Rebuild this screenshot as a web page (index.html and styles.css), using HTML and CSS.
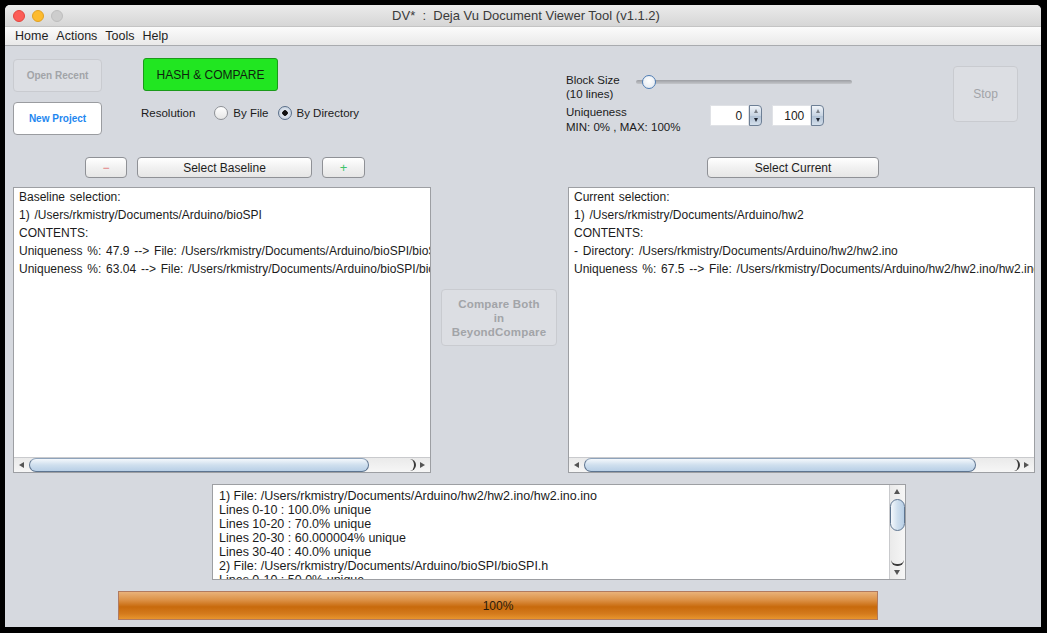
FILE: index.html
```html
<!DOCTYPE html>
<html>
<head>
<meta charset="utf-8">
<link rel="stylesheet" href="styles.css">
</head>
<body>
<div class="window">
  <div class="titlebar">
    <div class="lights"><span class="light red"></span><span class="light yellow"></span><span class="light gray"></span></div>
    <div class="title">DV* &nbsp;: &nbsp;Deja Vu Document Viewer Tool (v1.1.2)</div>
  </div>
  <div class="menubar">
    <span>Home</span><span>Actions</span><span>Tools</span><span>Help</span>
  </div>
  <div class="content">
    <div class="top">
      <div class="col-a">
        <div class="btn disabled small-bold open-recent">Open Recent</div>
        <div class="btn new-project">New Project</div>
      </div>
      <div class="col-b">
        <div class="btn green">HASH &amp; COMPARE</div>
        <div class="resolution">
          <span class="res-label">Resolution</span>
          <span class="radio"></span><span class="radio-text">By File</span>
          <span class="radio checked"></span><span class="radio-text">By Directory</span>
        </div>
      </div>
      <div class="col-c">
        <div class="block-row">
          <div class="lbl block-lbl">Block Size<br>(10 lines)</div>
          <div class="slider"><div class="track"></div><div class="knob"></div></div>
        </div>
        <div class="uniq-row">
          <div class="lbl uniq-lbl">Uniqueness<br>MIN: 0% , MAX: 100%</div>
          <div class="spinner"><div class="spin-field">0</div><div class="spin-btns"><span class="up"></span><span class="down"></span></div></div>
          <div class="spinner"><div class="spin-field">100</div><div class="spin-btns"><span class="up"></span><span class="down"></span></div></div>
        </div>
      </div>
      <div class="col-d">
        <div class="btn disabled stop">Stop</div>
      </div>
    </div>

    <div class="selects">
      <div class="btn aqua minus"><span class="minus-sign">−</span></div>
      <div class="btn aqua baseline">Select Baseline</div>
      <div class="btn aqua plus"><span class="plus-sign">+</span></div>
      <div class="btn aqua current">Select Current</div>
    </div>

    <div class="panels">
      <div class="panel left-panel">
        <div class="panel-text">
          <div>Baseline selection:</div>
          <div>1) /Users/rkmistry/Documents/Arduino/bioSPI</div>
          <div>CONTENTS:</div>
          <div>Uniqueness %: 47.9 --&gt; File: /Users/rkmistry/Documents/Arduino/bioSPI/bioSPI.h</div>
          <div>Uniqueness %: 63.04 --&gt; File: /Users/rkmistry/Documents/Arduino/bioSPI/bioSPI.cpp</div>
        </div>
        <div class="hscroll">
          <span class="arrow left-arrow"></span>
          <div class="htrack"><div class="hthumb" style="width:340px"></div><div class="endcap"></div></div>
          <span class="arrow right-arrow"></span>
        </div>
      </div>
      <div class="middle">
        <div class="btn disabled compare">Compare Both<br>in<br>BeyondCompare</div>
      </div>
      <div class="panel right-panel">
        <div class="panel-text">
          <div>Current selection:</div>
          <div>1) /Users/rkmistry/Documents/Arduino/hw2</div>
          <div>CONTENTS:</div>
          <div>- Directory: /Users/rkmistry/Documents/Arduino/hw2/hw2.ino</div>
          <div>Uniqueness %: 67.5 --&gt; File: /Users/rkmistry/Documents/Arduino/hw2/hw2.ino/hw2.ino.ino</div>
        </div>
        <div class="hscroll">
          <span class="arrow left-arrow"></span>
          <div class="htrack"><div class="hthumb" style="width:392px"></div><div class="endcap"></div></div>
          <span class="arrow right-arrow"></span>
        </div>
      </div>
    </div>

    <div class="results">
      <div class="results-text">
        <div>1) File: /Users/rkmistry/Documents/Arduino/hw2/hw2.ino/hw2.ino.ino</div>
        <div>Lines 0-10 : 100.0% unique</div>
        <div>Lines 10-20 : 70.0% unique</div>
        <div>Lines 20-30 : 60.000004% unique</div>
        <div>Lines 30-40 : 40.0% unique</div>
        <div>2) File: /Users/rkmistry/Documents/Arduino/bioSPI/bioSPI.h</div>
        <div>Lines 0-10 : 50.0% unique</div>
      </div>
      <div class="vscroll">
        <span class="varrow up-arrow"></span>
        <div class="vtrack"><div class="vthumb"></div><div class="vendcap"></div></div>
        <span class="varrow down-arrow"></span>
      </div>
    </div>

    <div class="progress"><span>100%</span></div>
  </div>
</div>
</body>
</html>
```

FILE: styles.css
```css
* { box-sizing: border-box; }
html, body { margin: 0; padding: 0; }
body {
  background: #000;
  padding: 5px;
  font-family: "Liberation Sans", Arial, sans-serif;
  font-size: 12px;
  color: #1b1b1b;
}
.window {
  width: 1036px;
  height: 622px;
  border-radius: 5px 5px 0 0;
  overflow: hidden;
  background: #d6d9df;
  display: flex;
  flex-direction: column;
}
.titlebar {
  height: 21px;
  background: linear-gradient(#ebebeb, #d6d6d6);
  display: flex;
  align-items: center;
}
.lights { display: flex; gap: 7px; margin-left: 8px; }
.light { width: 12px; height: 12px; border-radius: 50%; display: block; }
.light.red { background: #fc5d57; border: 1px solid #e2463f; }
.light.yellow { background: #fdbb2e; border: 1px solid #e0a023; }
.light.gray { background: #cdcdcd; border: 1px solid #bdbdbd; }
.title {
  flex: 1;
  text-align: center;
  font-size: 13px;
  color: #3a3a3a;
  margin-right: 52px;
}
.menubar {
  height: 20px;
  background: linear-gradient(#fbfbfb, #e9e9e9);
  border-bottom: 1px solid #a9abaf;
  border-top: 1px solid #c4c4c4;
  display: flex;
  align-items: center;
  padding-left: 10px;
  gap: 8px;
  font-size: 12.5px;
  color: #1f1f1f;
}
.content { flex: 1; display: flex; flex-direction: column; }

/* ----- buttons ----- */
.btn {
  display: flex;
  align-items: center;
  justify-content: center;
  border-radius: 4px;
  text-align: center;
}
.btn.disabled {
  background: #dcdee3;
  border: 1px solid #c9cbd0;
  color: #a2a4a8;
}
.small-bold { font-size: 10px; font-weight: bold; }
.aqua {
  background: linear-gradient(#ffffff, #f1f1f1 50%, #e6e6e6);
  border: 1px solid #8f9196;
  font-size: 12px;
  color: #1d1d1d;
  height: 21px;
}

/* ----- top area ----- */
.top { height: 111px; display: flex; align-items: flex-start; }
.col-a { margin-left: 8px; width: 89px; padding-top: 13px; display: flex; flex-direction: column; gap: 10px; }
.open-recent { height: 33px; }
.new-project {
  height: 33px;
  background: #fff;
  border: 1px solid #9a9ca0;
  color: #1e87f0;
  font-size: 10px;
  font-weight: bold;
}
.col-b { margin-left: 39px; width: 250px; padding-top: 12px; }
.green {
  margin-left: 2px;
  width: 135px;
  height: 33px;
  background: #21e621;
  border: 1px solid #1b9a1b;
  font-size: 12px;
  color: #0f1f0f;
  border-radius: 3px;
}
.resolution {
  margin-top: 13px; height: 18px; display: flex; align-items: center;
  font-size: 11.5px; white-space: nowrap;
}
.res-label { margin-right: 19px; }
.radio {
  flex: none;
  width: 14px; height: 14px; border-radius: 50%;
  border: 1px solid #8e9196;
  background: linear-gradient(#ffffff, #e6e6e6);
  display: inline-block;
  margin-right: 5px;
}
.radio.checked {
  border-color: #5a6f8a;
  background: radial-gradient(circle, #111 0 2.5px, #dfe6ef 3px, #b9c6d6);
}
.radio-text { margin-right: 9px; }
.col-c { margin-left: 175px; width: 290px; padding-top: 27px; }
.lbl { font-size: 11.5px; color: #1b1b1b; }
.block-row { display: flex; align-items: flex-start; }
.block-lbl { width: 70px; line-height: 14px; }
.slider { position: relative; width: 216px; height: 14px; margin-top: 2px; }
.track {
  position: absolute; left: 0; right: 0; top: 5px; height: 4px; border-radius: 2px;
  background: linear-gradient(#9c9ea3, #c4c6ca);
}
.knob {
  position: absolute; left: 6px; top: 0; width: 14px; height: 14px; border-radius: 50%;
  background: radial-gradient(circle at 50% 40%, #ffffff, #dfe6ee);
  border: 1.5px solid #4e7db4;
}
.uniq-row { display: flex; align-items: flex-start; margin-top: 4px; }
.uniq-lbl { width: 144px; line-height: 15px; }
.spinner { display: flex; width: 52px; height: 21px; margin-right: 10px; }
.spin-field {
  width: 40px; background: #fff; text-align: right; padding-right: 6px;
  font-size: 12px; line-height: 21px; border: 1px solid #e0e2e6;
}
.spin-btns {
  width: 13px; border: 1px solid #6d7f95; border-radius: 0 4px 4px 0;
  background: linear-gradient(#f0f4f9, #c8d4e2 50%, #aebfd3 50%, #d4dfeb);
  display: flex; flex-direction: column; align-items: center; justify-content: space-around;
}
.up, .down { width: 0; height: 0; border-left: 2.5px solid transparent; border-right: 2.5px solid transparent; }
.up { border-bottom: 4px solid #7a7f86; }
.down { border-top: 4px solid #1e2430; }
.col-d { margin-left: 97px; padding-top: 20px; }
.stop { width: 65px; height: 56px; font-size: 12px; }

/* ----- select row ----- */
.selects { display: flex; height: 21px; }
.minus { margin-left: 80px; width: 42px; }
.minus-sign { color: #e2777a; font-size: 12px; }
.baseline { margin-left: 10px; width: 175px; }
.plus { margin-left: 10px; width: 43px; }
.plus-sign { color: #3fc46a; font-size: 13px; }
.current { margin-left: 342px; width: 172px; }

/* ----- panels ----- */
.panels { display: flex; height: 286px; margin-top: 9px; }
.panel {
  background: #fff;
  border: 1px solid #9d9fa3;
  display: flex; flex-direction: column;
  overflow: hidden;
}
.left-panel { margin-left: 8px; width: 418px; }
.right-panel { width: 467px; }
.panel-text {
  flex: 1;
  padding: 0 0 0 5px;
  line-height: 18px;
  white-space: nowrap;
  overflow: hidden;
  font-size: 12px;
  word-spacing: 1.5px;
}
.middle { width: 137px; padding-top: 102px; padding-left: 10px; }
.compare {
  width: 116px; height: 57px;
  font-weight: bold; font-size: 11.5px; line-height: 14px;
  color: #a7a9ad;
  letter-spacing: 0.2px;
}
.hscroll {
  height: 15px;
  display: flex;
  align-items: stretch;
  background: linear-gradient(#eaeaea, #f6f6f6);
  border-top: 1px solid #c9cacd;
}
.arrow { width: 15px; position: relative; }
.arrow::after {
  content: ""; position: absolute; top: 4px; width: 0; height: 0;
  border-top: 3px solid transparent; border-bottom: 3px solid transparent;
}
.left-arrow::after { left: 5px; border-right: 5px solid #555; }
.right-arrow::after { left: 5px; border-left: 5px solid #555; }
.htrack { flex: 1; display: flex; align-items: stretch; position: relative; }
.hthumb {
  height: 14px;
  border-radius: 7px;
  background: linear-gradient(#f4f8fc, #cfdfee 50%, #b8cfe6);
  border: 1px solid #5e7590;
  border-top-color: #8ea3bb;
}
.endcap {
  position: absolute; right: -1px; top: 1px; width: 7px; height: 12px;
  border-radius: 0 6px 6px 0;
  border-right: 2px solid #3a3a3a;
}

/* ----- results ----- */
.results {
  margin-top: 11px;
  margin-left: 207px;
  width: 694px;
  height: 96px;
  background: #fff;
  border: 1px solid #9d9fa3;
  display: flex;
  overflow: hidden;
}
.results-text {
  flex: 1;
  padding: 4px 0 0 6px;
  line-height: 14px;
  font-size: 12.5px;
  white-space: nowrap;
  overflow: hidden;
}
.vscroll {
  width: 16px;
  display: flex; flex-direction: column;
  background: linear-gradient(90deg, #eaeaea, #f6f6f6);
  border-left: 1px solid #c9cacd;
}
.varrow { height: 14px; position: relative; }
.varrow::after {
  content: ""; position: absolute; left: 4px; width: 0; height: 0;
  border-left: 3px solid transparent; border-right: 3px solid transparent;
}
.up-arrow::after { top: 4px; border-bottom: 5px solid #555; }
.down-arrow::after { top: 5px; border-top: 5px solid #555; }
.vtrack { flex: 1; position: relative; }
.vthumb {
  height: 32px;
  border-radius: 8px;
  background: linear-gradient(90deg, #f4f8fc, #cfdfee 50%, #b8cfe6);
  border: 1px solid #5e7590;
}
.vendcap {
  position: absolute; left: 1px; right: 1px; bottom: -1px; height: 7px;
  border-radius: 0 0 6px 6px;
  border-bottom: 2px solid #3a3a3a;
}

/* ----- progress ----- */
.progress {
  margin-top: 11px;
  margin-left: 113px;
  width: 760px;
  height: 29px;
  border: 1px solid #b07a60;
  background: linear-gradient(#e9b27a, #dc9146 30%, #c86a0c 55%, #d47a1c 80%, #e8952e);
  display: flex; align-items: center; justify-content: center;
  font-size: 12px;
  color: #2a1a0a;
}
```
